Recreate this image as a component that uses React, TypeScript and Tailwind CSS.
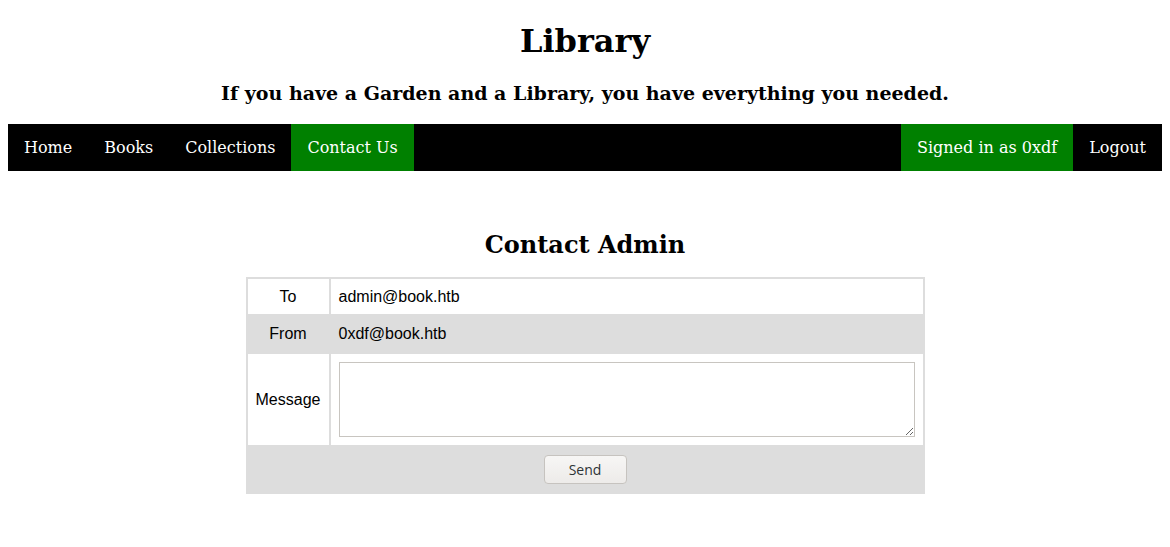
import React from 'react';

const navLeft = ['Home', 'Books', 'Collections', 'Contact Us'];

const App = () => {
  return (
    <div className="min-h-screen bg-white px-2 text-black" style={{ fontFamily: '"DejaVu Serif", serif' }}>
      {/* Header */}
      <h1 className="pt-[23px] text-center text-[32px] font-bold leading-[37px]">Library</h1>
      <h3 className="mt-[22px] text-center text-[19px] font-bold leading-[22px]">
        If you have a Garden and a Library, you have everything you needed.
      </h3>

      {/* Nav */}
      <nav className="mt-[20px] flex bg-black text-[16px] text-white">
        {navLeft.map((item) => (
          <a
            key={item}
            className={`px-4 py-[14px] leading-[19px] ${item === 'Contact Us' ? 'bg-[#008000]' : ''}`}
          >
            {item}
          </a>
        ))}
        <div className="flex-1" />
        <a className="bg-[#008000] px-4 py-[14px] leading-[19px]">Signed in as 0xdf</a>
        <a className="px-4 py-[14px] leading-[19px]">Logout</a>
      </nav>

      {/* Contact form */}
      <h2 className="mt-[60px] text-center text-[24px] font-bold leading-[28px]">Contact Admin</h2>
      <div className="mt-[18px] flex justify-center">
        <table
          className="w-[679px] border-collapse border-2 border-[#ddd] text-[16px]"
          style={{ fontFamily: '"Liberation Sans", Arial, sans-serif' }}
        >
          <tbody>
            <tr className="h-[37px]">
              <td className="w-[83px] border-2 border-[#ddd] px-2 text-center">To</td>
              <td className="border-2 border-[#ddd] px-2">admin@book.htb</td>
            </tr>
            <tr className="h-[38px] bg-[#ddd]">
              <td className="border-2 border-[#ddd] px-2 text-center">From</td>
              <td className="border-2 border-[#ddd] px-2">0xdf@book.htb</td>
            </tr>
            <tr>
              <td className="border-2 border-[#ddd] px-2 text-center">Message</td>
              <td className="border-2 border-[#ddd] p-2">
                <textarea className="block h-[75px] w-full border border-[#c8c5c0] bg-white" />
              </td>
            </tr>
            <tr className="h-[47px] bg-[#ddd]">
              <td colSpan={2} className="border-2 border-[#ddd] text-center">
                <button
                  className="h-[29px] w-[83px] rounded-[4px] border border-[#c6c3bf] bg-gradient-to-b from-[#f7f6f5] to-[#edebe9] text-[14px] text-[#2e3436]"
                  style={{ fontFamily: '"Open Sans", "DejaVu Sans", sans-serif' }}
                >
                  Send
                </button>
              </td>
            </tr>
          </tbody>
        </table>
      </div>
    </div>
  );
};

export default App;
